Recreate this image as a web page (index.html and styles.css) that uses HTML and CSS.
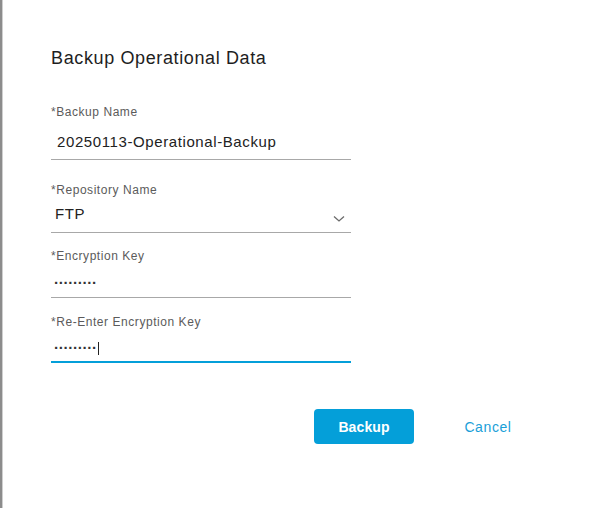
FILE: index.html
```html
<!DOCTYPE html>
<html lang="en">
<head>
<meta charset="utf-8">
<title>Backup Operational Data</title>
<link rel="stylesheet" href="styles.css">
</head>
<body>
<div class="dialog">
  <h1 class="title">Backup Operational Data</h1>
  <form class="form">
    <div class="field field--name">
      <div class="label">*Backup Name</div>
      <div class="input"><span class="value">20250113-Operational-Backup</span></div>
    </div>
    <div class="field field--repo">
      <div class="label">*Repository Name</div>
      <div class="input select">
        <span class="value">FTP</span>
        <svg class="chevron" width="12" height="8" viewBox="0 0 12 8"><path d="M1 1.5 L6 6 L11 1.5" fill="none" stroke="#6b6b6b" stroke-width="1.3"/></svg>
      </div>
    </div>
    <div class="field field--key">
      <div class="label">*Encryption Key</div>
      <div class="input"><span class="value dots">·········</span></div>
    </div>
    <div class="field field--rekey">
      <div class="label">*Re-Enter Encryption Key</div>
      <div class="input focused"><span class="value dots">·········</span><span class="caret"></span></div>
    </div>
  </form>
  <div class="actions">
    <button class="btn btn-primary" type="button">Backup</button>
    <button class="btn btn-link" type="button">Cancel</button>
  </div>
</div>
</body>
</html>
```
FILE: styles.css
```css
html, body {
  margin: 0;
  padding: 0;
  height: 100%;
  background: #ffffff;
}
body {
  font-family: "Liberation Sans", Arial, sans-serif;
}
.dialog {
  box-sizing: border-box;
  min-height: 100%;
  border-left: 2px solid #8c8c8c;
  box-shadow: inset 1px 0 0 #cfcfcf;
  padding: 47px 0 0 49px;
}
.title {
  margin: 0;
  font-size: 18px;
  line-height: 22px;
  font-weight: normal;
  letter-spacing: 0.62px;
  color: #1e1e1e;
}
.form {
  width: 300px;
  margin-top: 36px;
  display: flex;
  flex-direction: column;
}
.field {
  display: flex;
  flex-direction: column;
}
.label {
  font-size: 12px;
  line-height: 14px;
  color: #5b5b5b;
  letter-spacing: 0.55px;
}
.input {
  display: flex;
  align-items: flex-start;
  border-bottom: 1px solid #a8a8a8;
}
.value {
  font-size: 15px;
  line-height: 18px;
  letter-spacing: 0.6px;
  color: #222222;
}
.field--name .input { margin-top: 14px; padding: 0 0 8px 6px; }
.field--repo { margin-top: 23px; }
.field--repo .input { margin-top: 8px; padding: 0 0 9px 4px; justify-content: space-between; }
.field--key { margin-top: 16px; }
.field--key .input { margin-top: 11px; padding: 0 0 5px 3px; }
.field--rekey { margin-top: 17px; }
.field--rekey .input { margin-top: 10px; padding: 0 0 4px 3px; }
.input.focused {
  border-bottom: 2px solid #049fd9;
}
.chevron {
  margin: 10px 6px 0 0;
}
.dots {
  color: #333333;
  font-weight: bold;
  letter-spacing: -0.25px;
}
.caret {
  display: block;
  width: 1px;
  height: 13px;
  margin: 3px 0 0 1px;
  background: #222222;
}
.actions {
  display: flex;
  justify-content: flex-end;
  gap: 24px;
  margin-top: 46px;
  padding-right: 57px;
}
.btn {
  width: 100px;
  height: 35px;
  border: none;
  border-radius: 4px;
  font-family: "Liberation Sans", Arial, sans-serif;
  font-size: 14px;
  cursor: pointer;
}
.btn-primary {
  background: #049fd9;
  color: #ffffff;
  font-weight: bold;
  letter-spacing: 0.1px;
}
.btn-link {
  background: transparent;
  color: #1aa0d8;
  letter-spacing: 0.6px;
}
```
